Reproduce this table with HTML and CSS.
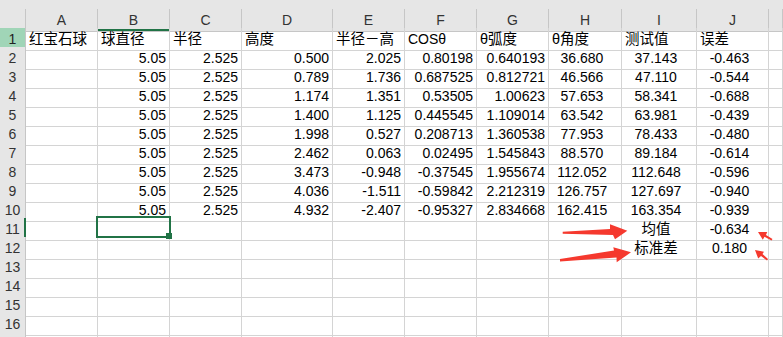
FILE: index.html
```html
<!DOCTYPE html>
<html lang="zh">
<head>
<meta charset="utf-8">
<title>Sheet</title>
<link rel="stylesheet" href="styles.css">
</head>
<body>
<div class="sheet">
  <div class="topbar"></div>
  <div class="row head">
    <div class="cell corner"></div><div class="cell">A</div><div class="cell colsel">B</div><div class="cell">C</div><div class="cell">D</div><div class="cell">E</div><div class="cell">F</div><div class="cell">G</div><div class="cell">H</div><div class="cell">I</div><div class="cell">J</div><div class="cell"></div>
  </div>
  <div class="row">
    <div class="cell rh rh-hi">1</div><div class="cell cjk">红宝石球</div><div class="cell cjk">球直径</div><div class="cell cjk">半径</div><div class="cell cjk">高度</div><div class="cell cjk">半径－高</div><div class="cell">COSθ</div><div class="cell cjk">θ弧度</div><div class="cell cjk">θ角度</div><div class="cell cjk">测试值</div><div class="cell cjk">误差</div><div class="cell"></div>
  </div>
  <div class="row">
    <div class="cell rh">2</div><div class="cell"></div><div class="cell r">5.05</div><div class="cell r">2.525</div><div class="cell r">0.500</div><div class="cell r">2.025</div><div class="cell r">0.80198</div><div class="cell r">0.640193</div><div class="cell m">36.680</div><div class="cell m">37.143</div><div class="cell m">-0.463</div><div class="cell"></div>
  </div>
  <div class="row">
    <div class="cell rh">3</div><div class="cell"></div><div class="cell r">5.05</div><div class="cell r">2.525</div><div class="cell r">0.789</div><div class="cell r">1.736</div><div class="cell r">0.687525</div><div class="cell r">0.812721</div><div class="cell m">46.566</div><div class="cell m">47.110</div><div class="cell m">-0.544</div><div class="cell"></div>
  </div>
  <div class="row">
    <div class="cell rh">4</div><div class="cell"></div><div class="cell r">5.05</div><div class="cell r">2.525</div><div class="cell r">1.174</div><div class="cell r">1.351</div><div class="cell r">0.53505</div><div class="cell r">1.00623</div><div class="cell m">57.653</div><div class="cell m">58.341</div><div class="cell m">-0.688</div><div class="cell"></div>
  </div>
  <div class="row">
    <div class="cell rh">5</div><div class="cell"></div><div class="cell r">5.05</div><div class="cell r">2.525</div><div class="cell r">1.400</div><div class="cell r">1.125</div><div class="cell r">0.445545</div><div class="cell r">1.109014</div><div class="cell m">63.542</div><div class="cell m">63.981</div><div class="cell m">-0.439</div><div class="cell"></div>
  </div>
  <div class="row">
    <div class="cell rh">6</div><div class="cell"></div><div class="cell r">5.05</div><div class="cell r">2.525</div><div class="cell r">1.998</div><div class="cell r">0.527</div><div class="cell r">0.208713</div><div class="cell r">1.360538</div><div class="cell m">77.953</div><div class="cell m">78.433</div><div class="cell m">-0.480</div><div class="cell"></div>
  </div>
  <div class="row">
    <div class="cell rh">7</div><div class="cell"></div><div class="cell r">5.05</div><div class="cell r">2.525</div><div class="cell r">2.462</div><div class="cell r">0.063</div><div class="cell r">0.02495</div><div class="cell r">1.545843</div><div class="cell m">88.570</div><div class="cell m">89.184</div><div class="cell m">-0.614</div><div class="cell"></div>
  </div>
  <div class="row">
    <div class="cell rh">8</div><div class="cell"></div><div class="cell r">5.05</div><div class="cell r">2.525</div><div class="cell r">3.473</div><div class="cell r">-0.948</div><div class="cell r">-0.37545</div><div class="cell r">1.955674</div><div class="cell m">112.052</div><div class="cell m">112.648</div><div class="cell m">-0.596</div><div class="cell"></div>
  </div>
  <div class="row">
    <div class="cell rh">9</div><div class="cell"></div><div class="cell r">5.05</div><div class="cell r">2.525</div><div class="cell r">4.036</div><div class="cell r">-1.511</div><div class="cell r">-0.59842</div><div class="cell r">2.212319</div><div class="cell m">126.757</div><div class="cell m">127.697</div><div class="cell m">-0.940</div><div class="cell"></div>
  </div>
  <div class="row">
    <div class="cell rh">10</div><div class="cell"></div><div class="cell r">5.05</div><div class="cell r">2.525</div><div class="cell r">4.932</div><div class="cell r">-2.407</div><div class="cell r">-0.95327</div><div class="cell r">2.834668</div><div class="cell m">162.415</div><div class="cell m">163.354</div><div class="cell m">-0.939</div><div class="cell"></div>
  </div>
  <div class="row">
    <div class="cell rh rowsel">11</div><div class="cell"></div><div class="cell"></div><div class="cell"></div><div class="cell"></div><div class="cell"></div><div class="cell"></div><div class="cell"></div><div class="cell"></div><div class="cell m cjk">均值</div><div class="cell m">-0.634</div><div class="cell"></div>
  </div>
  <div class="row">
    <div class="cell rh">12</div><div class="cell"></div><div class="cell"></div><div class="cell"></div><div class="cell"></div><div class="cell"></div><div class="cell"></div><div class="cell"></div><div class="cell"></div><div class="cell m cjk">标准差</div><div class="cell m">0.180</div><div class="cell"></div>
  </div>
  <div class="row">
    <div class="cell rh">13</div><div class="cell"></div><div class="cell"></div><div class="cell"></div><div class="cell"></div><div class="cell"></div><div class="cell"></div><div class="cell"></div><div class="cell"></div><div class="cell"></div><div class="cell"></div><div class="cell"></div>
  </div>
  <div class="row">
    <div class="cell rh">14</div><div class="cell"></div><div class="cell"></div><div class="cell"></div><div class="cell"></div><div class="cell"></div><div class="cell"></div><div class="cell"></div><div class="cell"></div><div class="cell"></div><div class="cell"></div><div class="cell"></div>
  </div>
  <div class="row">
    <div class="cell rh">15</div><div class="cell"></div><div class="cell"></div><div class="cell"></div><div class="cell"></div><div class="cell"></div><div class="cell"></div><div class="cell"></div><div class="cell"></div><div class="cell"></div><div class="cell"></div><div class="cell"></div>
  </div>
  <div class="row">
    <div class="cell rh">16</div><div class="cell"></div><div class="cell"></div><div class="cell"></div><div class="cell"></div><div class="cell"></div><div class="cell"></div><div class="cell"></div><div class="cell"></div><div class="cell"></div><div class="cell"></div><div class="cell"></div>
  </div>
  <div class="row">
    <div class="cell rh"></div><div class="cell"></div><div class="cell"></div><div class="cell"></div><div class="cell"></div><div class="cell"></div><div class="cell"></div><div class="cell"></div><div class="cell"></div><div class="cell"></div><div class="cell"></div><div class="cell"></div>
  </div>

  <div class="sel"></div>

  <svg class="marks" width="783" height="337" viewBox="0 0 783 337" xmlns="http://www.w3.org/2000/svg">
    <polygon fill="#f5392e" points="562.7,231.7 610,229 610,224.3 627.3,230.7 615,239.3 613,235 562.7,233.7"/>
    <polygon fill="#f5392e" points="560,259 614,250.5 613.3,247.3 631,252.3 616.7,262.3 616.5,257.5 560,261.5"/>
    <polygon fill="#f5392e" points="758,232 767.2,232 766,235 772.5,239 771.5,240.5 764.5,236.8 762.8,239.8"/>
    <polygon fill="#f5392e" points="755,250 764,251.8 762.5,254 768,259 767,260.5 761,256 758.2,258.6"/>
  </svg>
</div>
</body>
</html>
```

FILE: styles.css
```css
html, body {
  margin: 0;
  padding: 0;
  background: #ffffff;
}

body {
  width: 783px;
  height: 337px;
  overflow: hidden;
  font-family: "Liberation Sans", "Noto Sans CJK SC", sans-serif;
}

.sheet {
  position: relative;
  width: 783px;
  height: 337px;
  overflow: hidden;
}

.topbar {
  height: 9px;
  background: #e6e6e6;
}

.row {
  display: grid;
  grid-template-columns: 26px 72px 72px 72px 91px 72px 72px 72px 73px 75px 72px 1fr;
  height: 19px;
}

.cell {
  box-sizing: border-box;
  border-right: 1px solid #d4d4d4;
  border-bottom: 1px solid #d4d4d4;
  padding: 0 3px;
  font-size: 14px;
  line-height: 22px;
  color: #000000;
  white-space: nowrap;
}

.cjk {
  font-size: 14.5px;
}

.head .cell {
  background: #e6e6e6;
  border-right-color: #c6c6c6;
  border-bottom-color: #c6c6c6;
  text-align: center;
  color: #333333;
  padding: 0;
}

.corner {
  background: #e6e6e6 linear-gradient(to bottom right, transparent 50%, #b8b8b8 50%) no-repeat;
  background-size: 13px 11px;
  background-position: right 2px bottom 2px;
}

.head .corner {
  background-color: #e6e6e6;
}

.colsel {
  box-shadow: inset 0 -2px 0 #217346;
}

.rh {
  background: #e6e6e6;
  border-right-color: #c6c6c6;
  border-bottom-color: #c6c6c6;
  text-align: center;
  color: #333333;
  padding: 0;
}

.rh-hi {
  background: #a0d5b7;
  color: #222222;
}

.rowsel {
  border-right-color: #217346;
  box-shadow: inset -1px 0 0 #217346;
}

.r {
  text-align: right;
}

.m {
  text-align: center;
  padding: 0 6px 0 0;
}

.sel {
  position: absolute;
  left: 96px;
  top: 216px;
  width: 75px;
  height: 22px;
  box-sizing: border-box;
  border: 2px solid #217346;
}

.sel::after {
  content: "";
  position: absolute;
  right: -3px;
  bottom: -3px;
  width: 6px;
  height: 6px;
  background: #217346;
}

.marks {
  position: absolute;
  left: 0;
  top: 0;
  pointer-events: none;
}
```
